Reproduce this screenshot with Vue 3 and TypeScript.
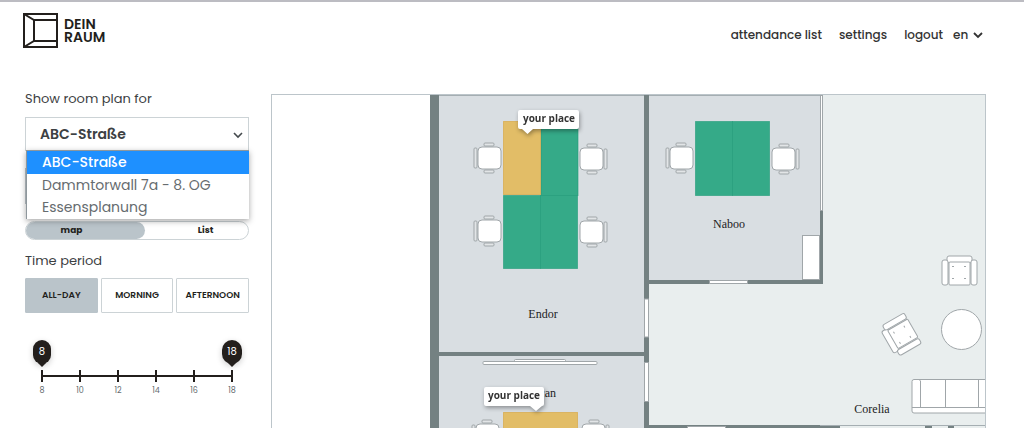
<script setup lang="ts">
import { ref } from 'vue'

interface Seat {
  x: number
  y: number
  flip?: boolean
}

const places = ['ABC-Straße', 'Dammtorwall 7a - 8. OG', 'Essensplanung']
const place = ref(places[0])
const view = ref('map')
const periods = ['ALL-DAY', 'MORNING', 'AFTERNOON']
const period = ref('ALL-DAY')
const hours = [8, 10, 12, 14, 16, 18]
const language = ref('en')

const seats: Seat[] = [
  { x: 489, y: 158 },
  { x: 592, y: 159, flip: true },
  { x: 489, y: 231 },
  { x: 592, y: 232, flip: true },
  { x: 681, y: 158 },
  { x: 784, y: 159, flip: true },
  { x: 487, y: 435 },
  { x: 594, y: 435, flip: true },
]
</script>

<template>
  <div class="page">
    <header class="header">
      <a class="brand" href="#">
        <svg class="logo" viewBox="0 0 35 35" aria-hidden="true">
          <path d="M1 1H34V34H1ZM11 7V28M1 1L11 7H34M1 34L11 28H34" fill="none" stroke="#231f1c" stroke-width="2" />
        </svg>
        <span class="brand-name">DEIN<br />RAUM</span>
      </a>
      <nav class="nav">
        <a href="#">attendance list</a>
        <a href="#">settings</a>
        <a href="#">logout</a>
        <span class="language">
          <select v-model="language" aria-label="Language">
            <option>en</option>
            <option>de</option>
          </select>
          <svg viewBox="0 0 10 7" aria-hidden="true"><path d="M1 1L5 5L9 1" fill="none" stroke="#333" stroke-width="1.8" /></svg>
        </span>
      </nav>
    </header>

    <main class="content">
      <aside class="sidebar">
        <label class="title" for="place">Show room plan for</label>
        <div class="picker">
          <select id="place" v-model="place">
            <option v-for="p in places" :key="p">{{ p }}</option>
          </select>
          <svg class="chevron" viewBox="0 0 10 7" aria-hidden="true"><path d="M1 1L5 5L9 1" fill="none" stroke="#444a4d" stroke-width="1.6" /></svg>
          <ul class="menu" role="listbox" aria-label="Room plans">
            <li v-for="p in places" :key="p" role="option" :aria-selected="p === place" :class="{ chosen: p === place }" @click="place = p">{{ p }}</li>
          </ul>
        </div>
        <div class="date-box"></div>
        <div class="switch">
          <button type="button" class="map-button" :class="{ on: view === 'map' }" @click="view = 'map'">map</button>
          <button type="button" class="list-button" :class="{ on: view === 'list' }" @click="view = 'list'">List</button>
        </div>
        <h2 class="title">Time period</h2>
        <div class="periods">
          <button v-for="p in periods" :key="p" type="button" :class="{ on: p === period }" @click="period = p">{{ p }}</button>
        </div>
        <div class="hours">
          <div v-for="h in hours" :key="h" class="hour">
            <span class="pin-slot"><span v-if="h === 8 || h === 18" class="pin">{{ h }}</span></span>
            <span class="tick"></span>
            <span class="hour-label">{{ h }}</span>
          </div>
        </div>
      </aside>

      <section class="plan" aria-label="Room plan">
        <svg viewBox="272 95 713 334" preserveAspectRatio="xMinYMin slice">
          <defs>
            <g id="seat" class="line">
              <rect x="-15" y="-10" width="3" height="20" rx="1" class="shade" />
              <rect x="-5" y="-15" width="10" height="3" rx="1" class="shade" />
              <rect x="-5" y="12" width="10" height="3" rx="1" class="shade" />
              <rect x="-11" y="-11" width="23" height="22" rx="4" />
            </g>
            <g id="armchair" class="line">
              <rect x="-12" y="-14" width="25" height="7" rx="2" />
              <rect x="-17" y="-10" width="6" height="25" rx="2" />
              <rect x="12" y="-10" width="6" height="25" rx="2" />
              <rect x="-10" y="-8" width="21" height="23" rx="1" />
              <path d="M-7 -3.500h2M5 -3.500h2M-7 8.500h2M5 8.500h2" />
            </g>
          </defs>

          <rect x="646" y="95" width="360" height="350" fill="#e9eeee" />
          <rect x="439" y="95" width="206" height="350" fill="#d9dee2" />
          <rect x="648" y="95" width="174" height="185" fill="#d9dee2" />
          <path d="M439 95.500H822" stroke="#a5aeb2" />

          <g fill="#748182">
            <rect x="430" y="95" width="9" height="350" />
            <rect x="644" y="95" width="5" height="350" />
            <rect x="439" y="352" width="206" height="4" />
            <rect x="644" y="280" width="179" height="4" />
            <rect x="820" y="210" width="3" height="74" />
            <rect x="644" y="425" width="196" height="4" />
            <rect x="925" y="426" width="7" height="4" />
            <rect x="948" y="426" width="6" height="4" />
          </g>
          <path d="M820 425.500H986" stroke="#a5aeb2" />
          <g class="line">
            <rect x="820.500" y="95.500" width="2" height="115" />
            <rect x="644.500" y="299" width="4" height="38" />
            <rect x="644.500" y="362.500" width="4" height="39" />
            <rect x="709.500" y="280.500" width="38" height="3" />
            <rect x="687.500" y="426.500" width="38" height="4" />
            <rect x="802.500" y="235.500" width="17" height="44" />
            <rect x="514.500" y="359.500" width="51" height="4" rx="1" />
            <rect x="483" y="361.500" width="114" height="3" rx="1" />
          </g>

          <g fill="#35aa88" stroke="#219b78" stroke-opacity="0.6">
            <rect x="541" y="121.500" width="37" height="74" />
            <rect x="503.500" y="195.500" width="37" height="73" />
            <rect x="540.500" y="195.500" width="37" height="73" />
            <rect x="695.500" y="121.500" width="37" height="74" />
            <rect x="732.500" y="121.500" width="37" height="74" />
          </g>
          <g fill="#e2bd67" stroke="#d8aa47" stroke-opacity="0.7">
            <rect x="503.500" y="121.500" width="37" height="73" />
            <rect x="503.500" y="412.500" width="74" height="40" />
          </g>

          <use v-for="s in seats" :key="`${s.x}-${s.y}`" href="#seat" :transform="`translate(${s.x} ${s.y}) scale(${s.flip ? -1 : 1} 1)`" />
          <use href="#armchair" transform="translate(959 270)" />
          <use href="#armchair" transform="translate(900 336) rotate(-120)" />
          <g class="line">
            <circle cx="961.500" cy="329.500" r="20" />
            <path d="M1000 379.500H914a2 2 0 0 0-2 2V411a2 2 0 0 0 2 2H1000M1000 407.500H912M920.500 407V381l-2-2M945.500 379V407M978.500 379V407" />
          </g>

          <g class="room">
            <text x="543" y="318">Endor</text>
            <text x="729" y="228">Naboo</text>
            <text x="872" y="413">Corelia</text>
            <text x="539" y="397">Vulcan</text>
          </g>

          <g class="tip">
            <path d="M520 110H577a2 2 0 0 1 2 2V127a2 2 0 0 1-2 2H533L527.500 134L522 129H520a2 2 0 0 1-2-2V112a2 2 0 0 1 2-2Z" />
            <text x="549" y="122">your place</text>
          </g>
          <g class="tip">
            <path d="M486 387H542a2 2 0 0 1 2 2V404a2 2 0 0 1-2 2L536 411L530 406H486a2 2 0 0 1-2-2V389a2 2 0 0 1 2-2Z" />
            <text x="514" y="399">your place</text>
          </g>
        </svg>
      </section>
    </main>
  </div>
</template>

<style>
body {
  margin: 0;
}
</style>

<style scoped>
* {
  box-sizing: border-box;
}
.page {
  height: 100vh;
  overflow: hidden;
  display: flex;
  flex-direction: column;
  border-top: 2px solid #bcbcc2;
  background: #fff;
  color: #3d4143;
  font-family: Poppins, Inter, "Open Sans", sans-serif;
}
a {
  color: inherit;
  text-decoration: none;
}
button,
select {
  font: inherit;
  color: inherit;
}
select {
  appearance: none;
  border: 0;
  background: none;
}
.header {
  flex: none;
  height: 92px;
  padding: 11px 41px 0 23px;
  display: flex;
  justify-content: space-between;
  align-items: flex-start;
}
.brand {
  display: flex;
  align-items: center;
  gap: 6px;
  color: #231f1c;
}
.logo {
  width: 35px;
  height: 35px;
}
.brand-name {
  font-size: 14px;
  line-height: 13px;
  font-weight: 600;
}
.nav {
  display: flex;
  gap: 17px;
  padding-top: 12px;
  font-size: 12px;
  line-height: 20px;
  font-weight: 500;
  color: #333;
}
.language {
  display: flex;
  align-items: center;
  margin-left: -7px;
  gap: 4px;
}
.language select {
  padding: 0;
}
.language svg {
  width: 10px;
  height: 7px;
}
.content {
  flex: 1;
  min-height: 0;
  display: flex;
  gap: 22px;
  padding: 0 38px 0 25px;
}
.sidebar {
  flex: none;
  width: 224px;
}
.title {
  display: block;
  margin: 0;
  font-size: 13px;
  line-height: 20px;
  font-weight: 400;
}
.sidebar > label.title {
  margin-top: -5px;
  margin-bottom: 8px;
}
.picker {
  position: relative;
}
.picker select {
  display: block;
  width: 100%;
  height: 34px;
  padding: 0 14px;
  border: 1px solid #ccd3d6;
  font-size: 14px;
  font-weight: 600;
}
.chevron {
  position: absolute;
  right: 6px;
  top: 15px;
  width: 10px;
  height: 7px;
}
.menu {
  position: absolute;
  z-index: 2;
  top: 33px;
  left: 1px;
  right: 0;
  margin: 0;
  padding: 0 0 1px;
  list-style: none;
  border: 1px solid #8e979c;
  border-width: 1px 0 0 1px;
  background: #fff;
  box-shadow: 0 2px 6px rgba(0, 0, 0, 0.35);
  color: #666c6f;
  font-size: 14px;
  line-height: 23px;
}
.menu li {
  padding-left: 15px;
  height: 22px;
}
.menu .chosen {
  height: 23px;
  background: #1e90ff;
  color: #fff;
  font-weight: 500;
}
.date-box {
  height: 36px;
  margin: 17px 0;
  border: 1px solid #bcc5ca;
}
.switch {
  display: flex;
  height: 19px;
  margin-bottom: 11px;
  border: 1px solid #ccd3d6;
  border-radius: 10px;
}
.switch button {
  border: 0;
  border-radius: 10px;
  background: none;
  color: #231f1c;
  font-size: 9px;
  line-height: 17px;
  font-weight: 700;
}
.switch .map-button {
  width: 119px;
  padding: 0 28px 0 0;
}
.switch .list-button {
  flex: 1;
  padding: 0 0 0 18px;
}
.switch .on {
  background: #bac4ca;
}
.periods {
  display: flex;
  gap: 3px;
  margin-top: 7px;
}
.periods button {
  flex: 1 1 0;
  min-width: 0;
  height: 35px;
  padding: 0;
  border: 1px solid #ccd3d6;
  border-radius: 1px;
  background: #fff;
  color: #231f1c;
  font-size: 9px;
  font-weight: 600;
}
.periods .on {
  border-color: #bac4ca;
  background: #bac4ca;
}
.hours {
  display: flex;
  margin: 27px -2px 0;
}
.hour {
  flex: 1;
  display: flex;
  flex-direction: column;
  align-items: center;
}
.pin-slot {
  height: 30px;
}
.pin {
  position: relative;
  display: block;
  min-width: 18px;
  height: 24px;
  padding: 0 5px;
  border-radius: 11px;
  background: #231f1c;
  box-shadow: 0 2px 6px rgba(0, 0, 0, 0.2);
  color: #fff;
  font-size: 10px;
  line-height: 24px;
  text-align: center;
}
.pin::after {
  content: "";
  position: absolute;
  top: 23px;
  left: calc(50% - 4px);
  border: 4px solid transparent;
  border-top-color: #231f1c;
  border-bottom: 0;
}
.tick {
  position: relative;
  width: 2px;
  height: 12px;
  background: #231f1c;
}
.hour:not(:last-child) .tick::after {
  content: "";
  position: absolute;
  left: 0;
  top: 5px;
  width: 38px;
  height: 2px;
  background: #231f1c;
}
.hour-label {
  margin-top: 3px;
  color: #666c6f;
  font-size: 8px;
  line-height: 12px;
}
.plan {
  flex: 1;
  min-width: 0;
  border: 1px solid #bcc5ca;
  border-bottom: 0;
  overflow: hidden;
}
.plan svg {
  display: block;
  width: 100%;
}
.line {
  fill: #fff;
  stroke: #a0a6a9;
  stroke-width: 1;
}
.shade {
  fill: #e2e5e7;
}
.room {
  font-family: "Liberation Serif", serif;
  font-size: 12px;
  text-anchor: middle;
  fill: #222;
}
.tip {
  filter: drop-shadow(1px 2px 2px rgba(0, 0, 0, 0.35));
}
.tip path {
  fill: #fff;
}
.tip text {
  font-family: "Open Sans", sans-serif;
  font-size: 10px;
  font-weight: 700;
  text-anchor: middle;
  fill: #333;
}
</style>
